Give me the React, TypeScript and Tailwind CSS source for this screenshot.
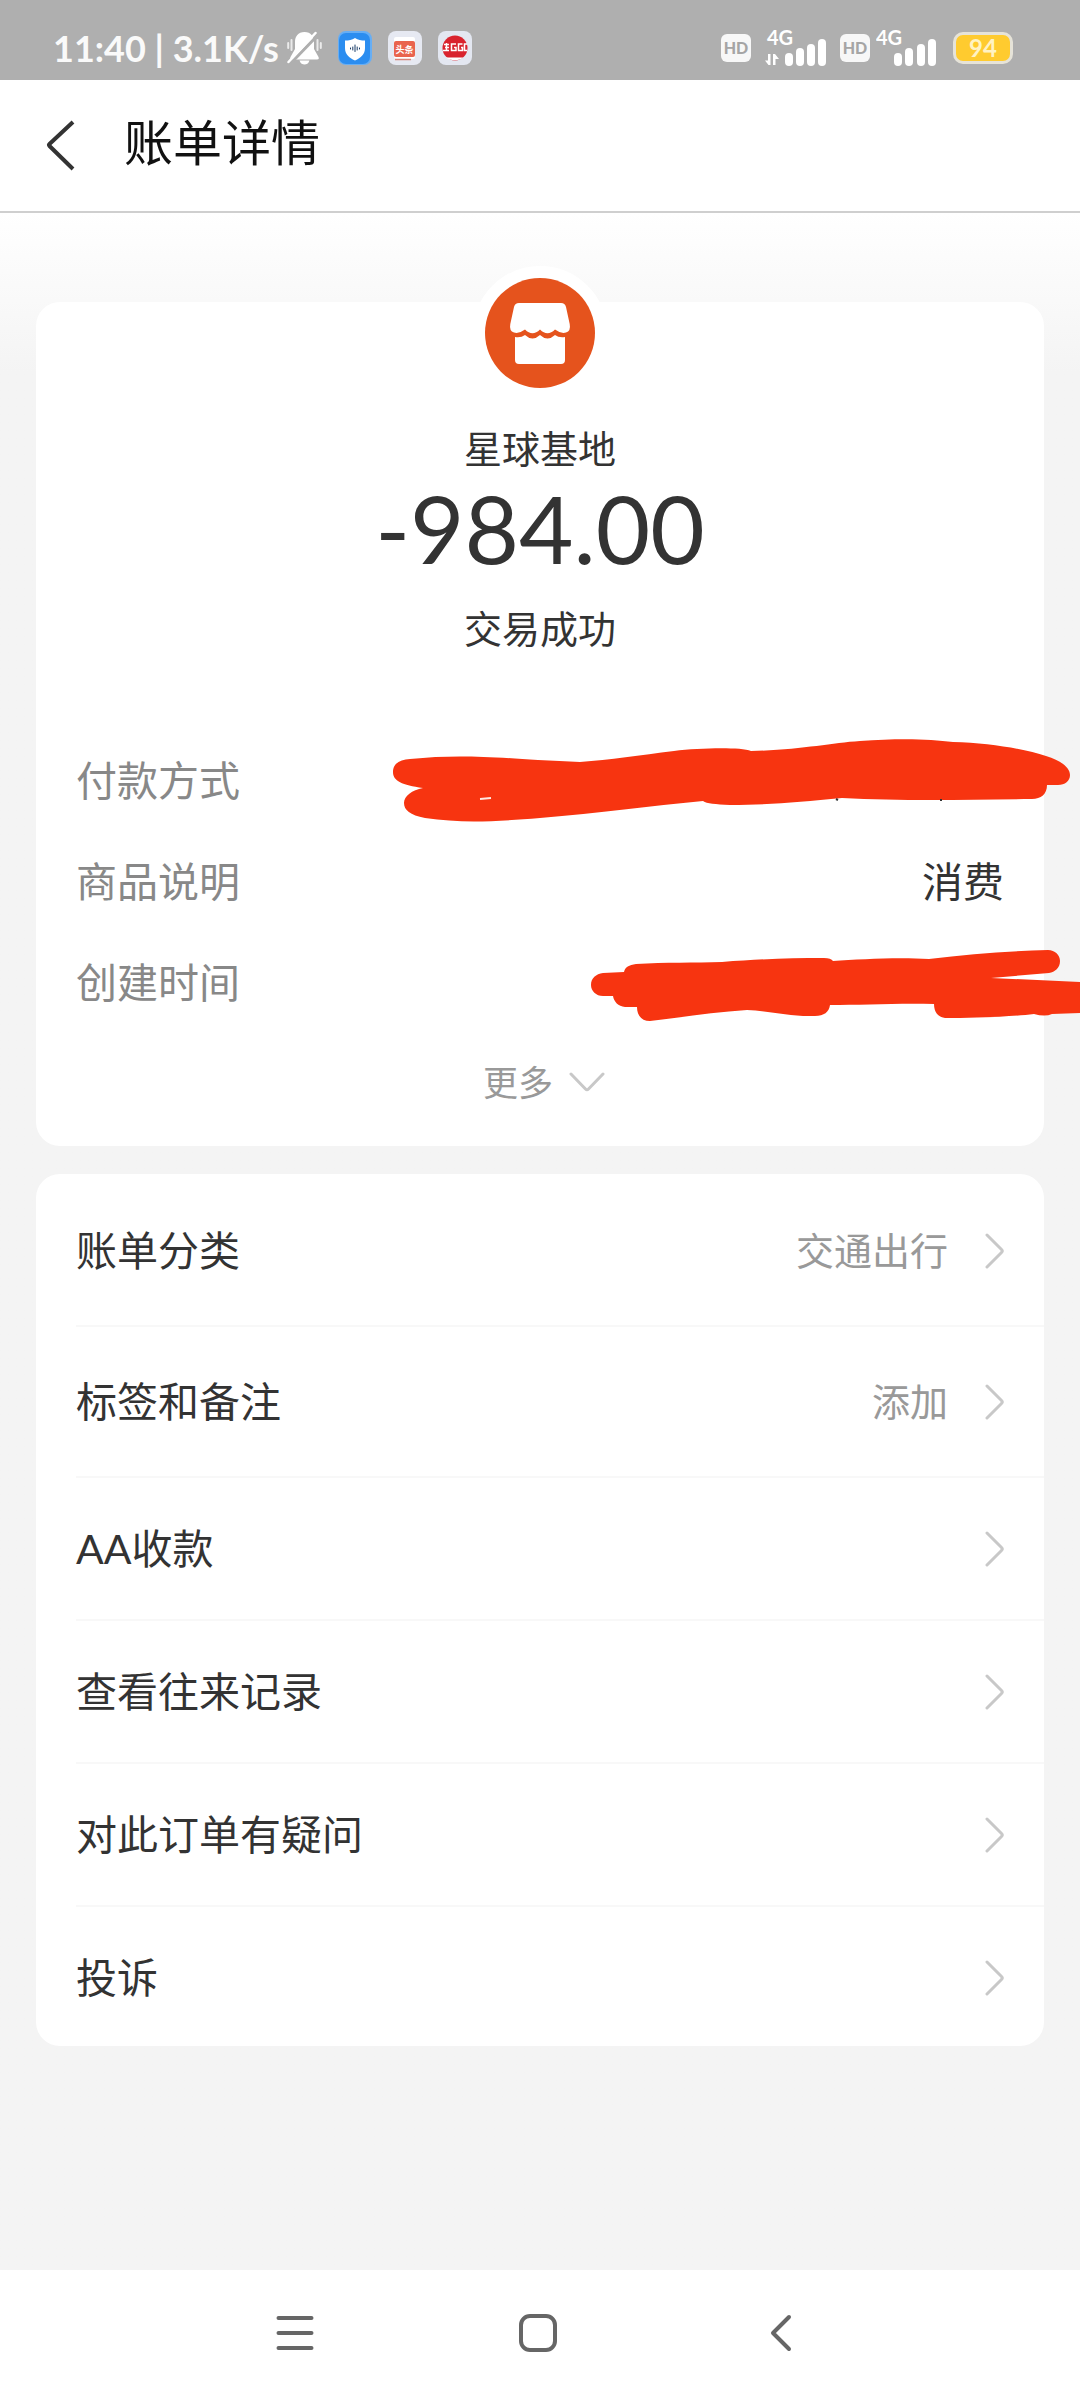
import React, { useState } from 'react';

interface DetailItem {
  label: string;
  value: string;
}

interface MenuItem {
  label: string;
  value?: string;
}

const details: DetailItem[] = [
  { label: '付款方式', value: '' },
  { label: '商品说明', value: '消费' },
  { label: '创建时间', value: '' },
];

const menuItems: MenuItem[] = [
  { label: '账单分类', value: '交通出行' },
  { label: '标签和备注', value: '添加' },
  { label: 'AA收款' },
  { label: '查看往来记录' },
  { label: '对此订单有疑问' },
  { label: '投诉' },
];

function BellOffIcon() {
  return (
    <svg width="35" height="34" viewBox="0 0 35 34" fill="none">
      <path d="M17.500 1C11 1 8 5.500 8 11V18L3.500 26Q2.500 28.500 5 28.500H30Q32.500 28.500 31.500 26L27 18V11C27 5.500 24 1 17.500 1Z" fill="#fff" />
      <path d="M12.500 29.500H22.500C21.500 32.500 19.500 33.500 17.500 33.500S13.500 32.500 12.500 29.500Z" fill="#fff" />
      <path d="M4.500 9V19M1.200 12V17M30.500 9V19M33.800 12V17" stroke="#fff" strokeOpacity=".75" strokeWidth="2" strokeLinecap="round" />
      <path d="M3 33L31 4" stroke="#afafaf" strokeWidth="3" />
      <path d="M1.500 31L28.500 2" stroke="#fff" strokeWidth="2.500" strokeLinecap="round" />
    </svg>
  );
}

function ShieldAppIcon() {
  return (
    <svg width="34" height="34" viewBox="0 0 34 34" fill="none">
      <rect width="34" height="34" rx="8" fill="#66aef5" />
      <rect x="1" y="2" width="31" height="31" rx="7" fill="#2b8df0" />
      <path d="M17 7C20 9 23 9.500 27 9.500V17C27 23 23 27 17 29.500C11 27 7 23 7 17V9.500C11 9.500 14 9 17 7Z" fill="#fff" />
      <path d="M12.500 17V18M14.800 16V19M17 14V20.500M19.200 16V19M21.500 17V18" stroke="#173a66" strokeWidth="1" strokeLinecap="round" />
    </svg>
  );
}

function NewsAppIcon() {
  return (
    <svg width="34" height="34" viewBox="0 0 34 34">
      <rect width="34" height="34" rx="8" fill="#e6e9f2" />
      <rect x="6" y="6" width="21" height="22" rx="2" fill="#fff" />
      <rect x="6" y="10" width="21" height="16" rx="2" fill="#e9644e" />
      <text x="16.500" y="21.500" textAnchor="middle" fontSize="9" fontWeight="700" fill="#fff">头条</text>
      <path d="M7 28.500H23" stroke="#d98478" strokeWidth="1.500" />
    </svg>
  );
}

function RedAppIcon() {
  return (
    <svg width="34" height="34" viewBox="0 0 34 34">
      <rect width="34" height="34" rx="8" fill="#e3e7f1" />
      <circle cx="17" cy="17" r="12.500" fill="#d9232e" />
      <path d="M8 26.500H25C22 30 12 30 8 26.500Z" fill="#fff" />
      <path d="M6 13.500H11M7 16.500H11M5 19.500H11M8.500 12V20M18 13H13.500V19.500H18V16.500H16M24.500 13H20.500V19.500H24.500V16.500H23M29 13H26.500V19.500H29" stroke="#fff" strokeWidth="1.500" fill="none" />
    </svg>
  );
}

function HdBadge() {
  return (
    <span className="flex h-7 w-[30px] items-center justify-center rounded-md bg-[#f7f7f7] text-base font-black text-[#a5a5a5]">
      HD
    </span>
  );
}

function SignalIcon({ arrows }: { arrows?: boolean }) {
  return (
    <svg width="61" height="50" viewBox="0 -6 61 50" fill="#fff">
      <text x={arrows ? 2 : 0} y="16" fontSize="20" fontWeight="700">4G</text>
      {arrows && <path d="M5.500 25V36H3.500L0 31.500H3V25ZM8 25H10L14 30H10.500V36H8Z" />}
      <rect x={arrows ? 20 : 18} y="24" width="8" height="13" rx="4" />
      <rect x={arrows ? 31 : 29} y="19" width="8" height="18" rx="4" />
      <rect x={arrows ? 42 : 41} y="15" width="8" height="22" rx="4" />
      <rect x={arrows ? 53 : 52} y="10" width="8" height="27" rx="4" />
    </svg>
  );
}

function StatusBar() {
  return (
    <div className="flex h-20 items-end justify-between bg-[#afafaf] pr-[67px] pb-3 pl-[53px]">
      <div className="flex h-10 items-center">
        <span className="mr-2 text-4xl leading-10 font-bold whitespace-pre text-[#fafafa]">11:40 | 3.1K/s</span>
        <BellOffIcon />
        <div className="ml-4 flex gap-4">
          <ShieldAppIcon />
          <NewsAppIcon />
          <RedAppIcon />
        </div>
      </div>
      <div className="flex h-10 items-center">
        <HdBadge />
        <div className="mx-3.5">
          <SignalIcon arrows />
        </div>
        <HdBadge />
        <div className="mr-4 ml-1.5">
          <SignalIcon />
        </div>
        <span className="flex h-8 w-[60px] items-center justify-center rounded-[10px] border-3 border-[#e6e3d8] bg-[#ffcb2f] text-2xl font-bold text-[#fff3c4]">
          94
        </span>
      </div>
    </div>
  );
}

function ShopIcon() {
  return (
    <svg width="110" height="110" viewBox="0 0 110 110">
      <circle cx="55" cy="55" r="55" fill="#e5531d" />
      <path
        d="M34 25H76Q80 25 81 29L84.700 46Q86 53 81 54.500Q76 56 70 51.500Q62.500 59 55 51.500Q47.500 59 40 51.500Q34 56 29 54.500Q24 53 25.300 46L29 29Q30 25 34 25Z"
        fill="#fff"
      />
      <path d="M30 59Q36 60 40 57Q47.500 64 55 57Q62.500 64 70 57Q74 60 80 59V82Q80 86 76 86H34Q30 86 30 82Z" fill="#fff" />
    </svg>
  );
}

function ChevronRight() {
  return (
    <svg width="20" height="38" viewBox="0 0 20 38" fill="none" stroke="#c8c8c8" strokeWidth="3" strokeLinecap="round" strokeLinejoin="round">
      <path d="M3 3L17.500 17.500Q19 19 17.500 20.500L3 35" />
    </svg>
  );
}

// red marker strokes that hide the payment method and the time
function MarkerStrokes() {
  return (
    <svg
      className="pointer-events-none absolute top-[436px] -right-9"
      width="690"
      height="290"
      viewBox="390 738 690 290"
      aria-hidden="true"
    >
      <path
        fill="#f73410"
        d="M393 772C393 763 400 760 410 759C450 755 480 756 538 760Q560 761 580 762C610 760 640 755 674 751C700 748 740 747 751 751C800 750 830 743 860 741C900 738 930 739 953 742C990 743 1025 749 1046 756C1062 761 1070 768 1070 775C1070 781 1065 785 1058 785H1047C1047 794 1041 799 1032 799C960 800 900 801 842 798C800 802 770 805 730 805C715 804 707 804 703 801C650 806 600 813 540 818C490 822 460 823 425 818C410 815 404 810 404 803C404 796 412 790 423 788C402 785 393 781 393 772Z"
      />
      <path d="M480 799L491 798" stroke="#ffe9e2" strokeWidth="2" />
      <path d="M836 799L838 800M940 800H942" stroke="#333" strokeWidth="2" />
      <path
        fill="#f73410"
        d="M591 985C591 978 596 974 603 973L624 972C625 967 629 965 636 964C665 962 695 963 722 962C760 959 790 958 824 958Q831 958 833 961C860 959 900 957 929 959C970 954 1010 951 1048 950C1055 950 1060 955 1060 961C1060 968 1055 972 1049 973L991 978L1080 982V1013L1052 1014Q1045 1017 1034 1014C1010 1017 970 1018 945 1018C938 1017 934 1012 934 1004C900 1003 860 1005 830 1005C829 1012 824 1016 815 1016C790 1017 770 1011 747 1010C715 1012 685 1017 650 1021C641 1021 637 1015 637 1007H625C618 1006 614 1002 613 996H603C596 996 591 991 591 985Z"
      />
    </svg>
  );
}

export default function App() {
  const [expanded, setExpanded] = useState(false);

  return (
    <div className="flex min-h-screen flex-col overflow-x-hidden bg-[#f4f4f4] font-[Lato,'Noto_Sans_CJK_SC',sans-serif] text-[#333]">
      <StatusBar />

      <header className="flex h-[133px] items-center border-b-2 border-[#cfcfcf] bg-white pl-11">
        <button type="button" aria-label="返回" className="mr-12">
          <svg width="32" height="52" viewBox="0 0 32 52" fill="none" stroke="#333" strokeWidth="4">
            <path d="M29 2L5.500 24Q4.500 25 5.500 26L29 49" />
          </svg>
        </button>
        <h1 className="pb-2 text-[49px] leading-[60px] text-[#111]">账单详情</h1>
      </header>

      <main className="flex-1 bg-linear-to-b from-white to-[#f4f4f4] to-[160px] px-9 pt-[89px]">
        <section className="relative flex flex-col rounded-3xl bg-white pb-11">
          <div className="-mt-9 self-center rounded-full border-12 border-white">
            <ShopIcon />
          </div>
          <p className="mt-7 text-center text-[38px] leading-10">星球基地</p>
          <p className="mt-3 text-center text-[94px] leading-24">-984.00</p>
          <p className="mt-8 text-center text-[38px] leading-10">交易成功</p>

          <dl className="mt-[113px] flex flex-col gap-[61px] px-10 text-[41px] leading-10">
            {details.map((item) => (
              <div key={item.label} className="flex justify-between">
                <dt className="text-[#888]">{item.label}</dt>
                <dd>{item.value}</dd>
              </div>
            ))}
          </dl>

          <button
            type="button"
            aria-expanded={expanded}
            onClick={() => setExpanded(!expanded)}
            className="mt-[59px] flex items-center gap-4 self-center pl-2 text-[35px] leading-10 text-[#999]"
          >
            更多
            <svg width="36" height="20" viewBox="0 0 36 20" fill="none" stroke="#c8c8c8" strokeWidth="3" strokeLinecap="round" strokeLinejoin="round">
              <path d="M2 2L16.500 17Q18 18.500 19.500 17L34 2" />
            </svg>
          </button>

          <MarkerStrokes />
        </section>

        <section className="mt-7 rounded-3xl bg-white pt-0.5 pl-10">
          {menuItems.map((item) => (
            <button
              key={item.label}
              type="button"
              className={`flex w-full items-center border-b-2 border-[#f8f8f8] pr-10 text-left text-[41px] leading-[41px] last:border-b-0 last:pb-12 ${
                item.value ? 'py-[54px]' : 'py-[50px]'
              }`}
            >
              <span className="flex-1">{item.label}</span>
              <span className="mr-9 text-[38px] text-[#999]">{item.value}</span>
              <ChevronRight />
            </button>
          ))}
        </section>
      </main>

      <nav className="bg-white px-[16%]">
        <div className="grid h-[130px] grid-cols-3 items-center justify-items-center pr-1 pb-1">
          <button type="button" aria-label="最近任务">
            <svg width="38" height="38" viewBox="0 0 38 38" stroke="#666" strokeWidth="4" strokeLinecap="round">
              <path d="M2.500 4H35.500M2.500 19H35.500M2.500 34H35.500" />
            </svg>
          </button>
          <button type="button" aria-label="主屏幕">
            <svg width="38" height="38" viewBox="0 0 38 38" fill="none" stroke="#666" strokeWidth="4">
              <rect x="2" y="2" width="34" height="34" rx="9" />
            </svg>
          </button>
          <button type="button" aria-label="返回">
            <svg width="38" height="38" viewBox="0 0 38 38" fill="none" stroke="#666" strokeWidth="4" strokeLinecap="round" strokeLinejoin="round">
              <path d="M27 3L11 19L27 35" />
            </svg>
          </button>
        </div>
      </nav>
    </div>
  );
}
